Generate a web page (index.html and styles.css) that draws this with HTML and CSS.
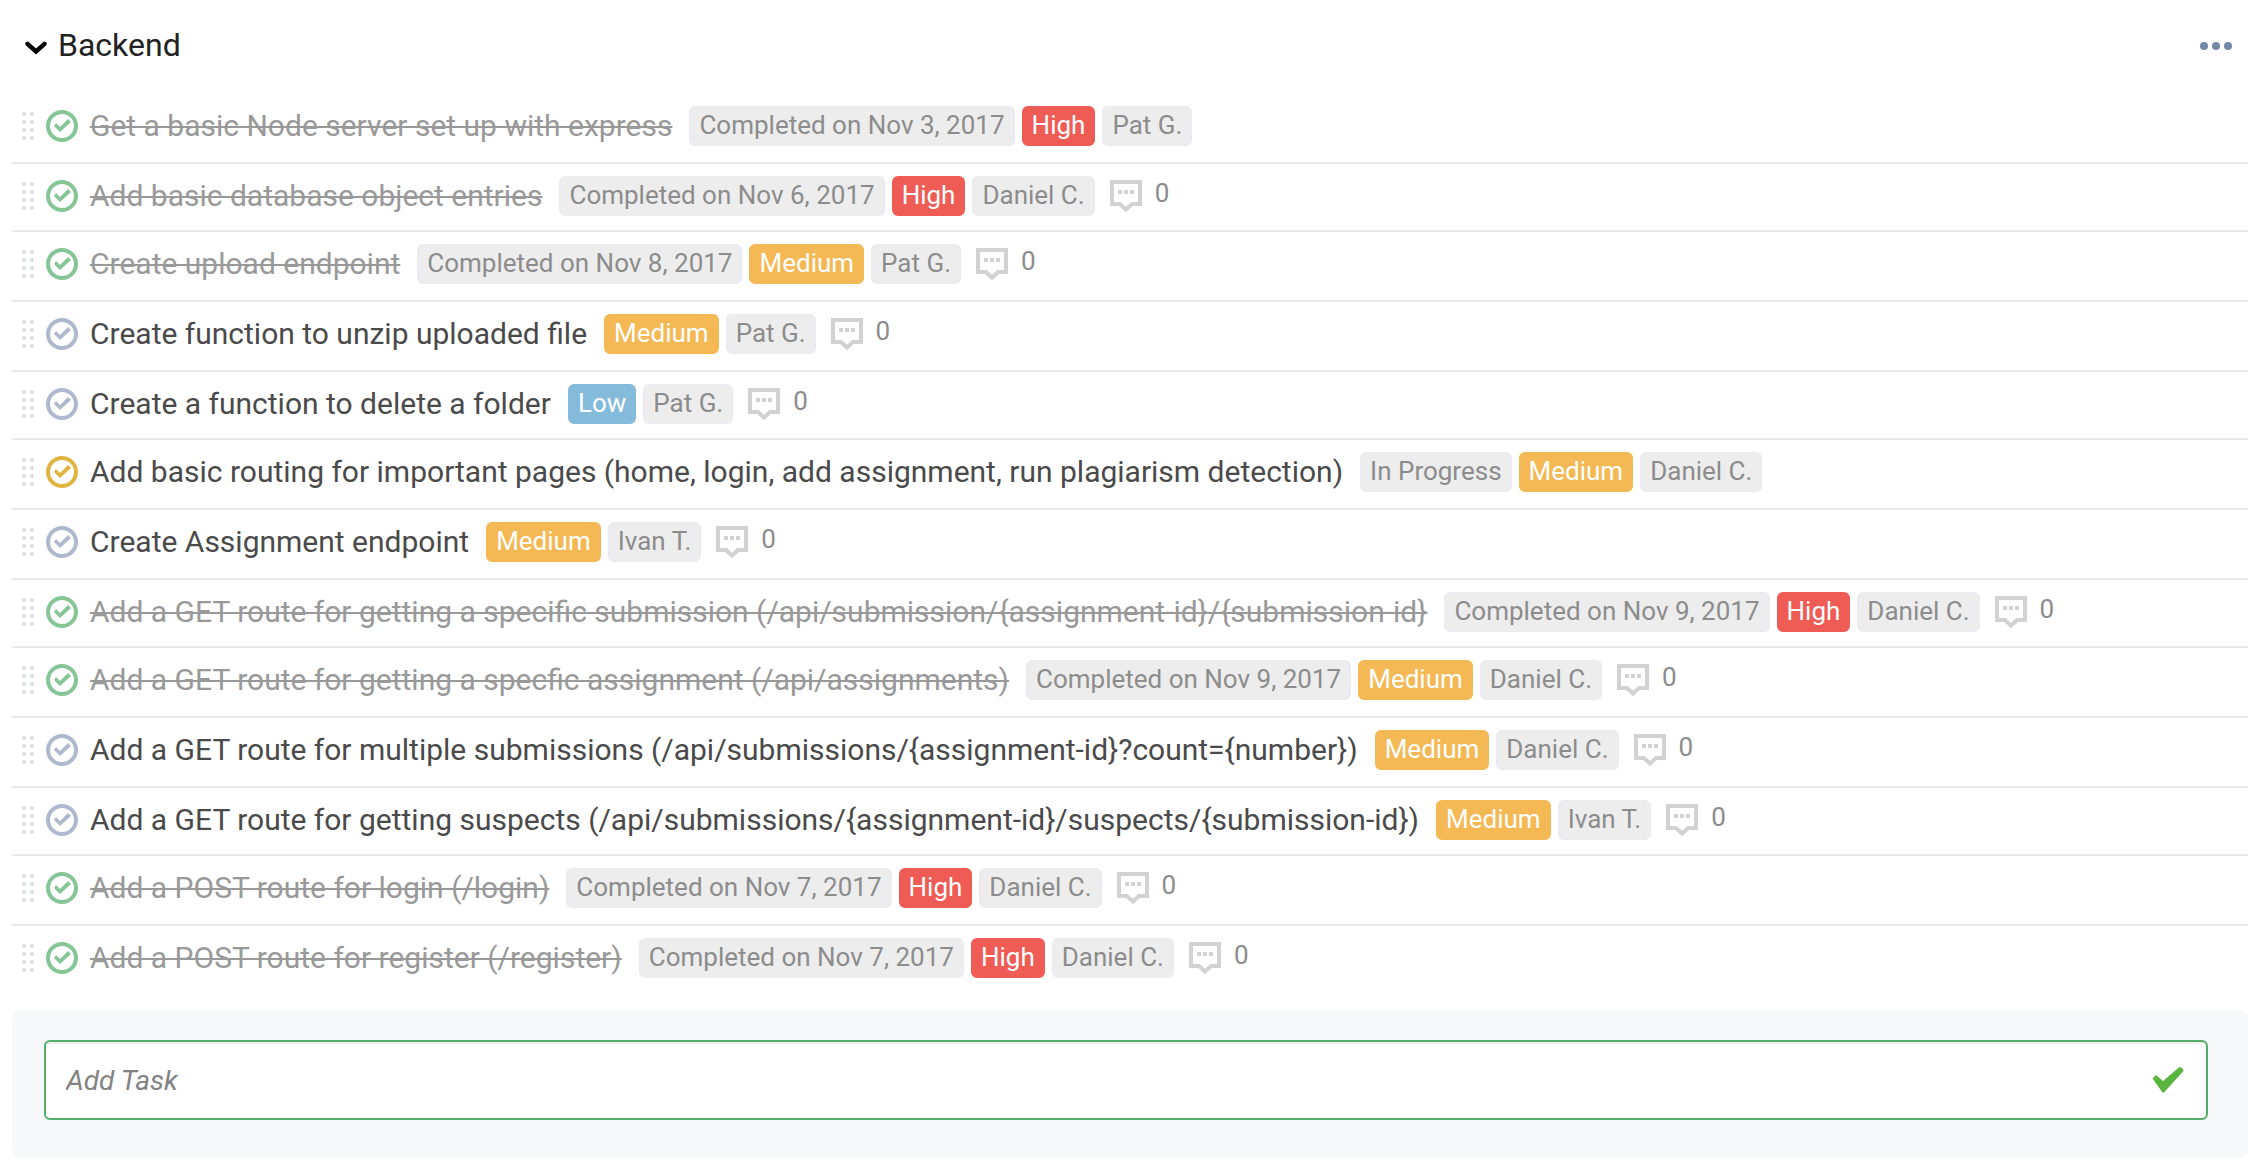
FILE: index.html
```html
<!DOCTYPE html>
<html lang="en">
<head>
<meta charset="utf-8">
<meta name="viewport" content="width=device-width, initial-scale=1">
<title>Backend</title>
<link rel="stylesheet" href="styles.css">
</head>
<body>
<svg class="sprite" aria-hidden="true">
  <symbol id="grip" viewBox="0 0 12 28">
    <circle cx="2" cy="2" r="2"/><circle cx="10" cy="2" r="2"/>
    <circle cx="2" cy="10" r="2"/><circle cx="10" cy="10" r="2"/>
    <circle cx="2" cy="18" r="2"/><circle cx="10" cy="18" r="2"/>
    <circle cx="2" cy="26" r="2"/><circle cx="10" cy="26" r="2"/>
  </symbol>
  <symbol id="comment" viewBox="0 0 32 32">
    <path d="M2 2H30V24H22L16 29.500L10 24H2Z" fill="none" stroke="currentColor" stroke-width="4"/>
    <path d="M8 10H12V14H8ZM14 10H18V14H14ZM20 10H24V14H20Z" fill="currentColor"/>
  </symbol>
</svg>
<main class="section">
  <header class="section-head">
    <button class="collapse" type="button" aria-label="Collapse section" aria-expanded="true">
      <svg width="22" height="14" viewBox="0 0 22 14" aria-hidden="true"><path d="M2.500 2.800L11 10.500L19.500 2.800" fill="none" stroke="currentColor" stroke-width="4.400" stroke-linecap="round"/></svg>
    </button>
    <h1 class="section-title">Backend</h1>
    <button class="more" type="button" aria-label="More options">
      <svg width="32" height="8" viewBox="0 0 32 8" aria-hidden="true"><circle cx="4" cy="4" r="4"/><circle cx="16" cy="4" r="4"/><circle cx="28" cy="4" r="4"/></svg>
    </button>
  </header>
  <ul class="tasks">
    <li class="task done"><svg class="grip"><use href="#grip"/></svg><input class="tick" type="checkbox" id="t1" checked><label class="name" for="t1">Get a basic Node server set up with express</label><div class="chips"><span class="chip">Completed on Nov 3, 2017</span><span class="chip high">High</span><span class="chip">Pat G.</span></div></li>
    <li class="task done"><svg class="grip"><use href="#grip"/></svg><input class="tick" type="checkbox" id="t2" checked><label class="name" for="t2">Add basic database object entries</label><div class="chips"><span class="chip">Completed on Nov 6, 2017</span><span class="chip high">High</span><span class="chip">Daniel C.</span></div><button class="comments" type="button" aria-label="Comments: 0"><svg><use href="#comment"/></svg><span>0</span></button></li>
    <li class="task done"><svg class="grip"><use href="#grip"/></svg><input class="tick" type="checkbox" id="t3" checked><label class="name" for="t3">Create upload endpoint</label><div class="chips"><span class="chip">Completed on Nov 8, 2017</span><span class="chip medium">Medium</span><span class="chip">Pat G.</span></div><button class="comments" type="button" aria-label="Comments: 0"><svg><use href="#comment"/></svg><span>0</span></button></li>
    <li class="task"><svg class="grip"><use href="#grip"/></svg><input class="tick" type="checkbox" id="t4"><label class="name" for="t4">Create function to unzip uploaded file</label><div class="chips"><span class="chip medium">Medium</span><span class="chip">Pat G.</span></div><button class="comments" type="button" aria-label="Comments: 0"><svg><use href="#comment"/></svg><span>0</span></button></li>
    <li class="task"><svg class="grip"><use href="#grip"/></svg><input class="tick" type="checkbox" id="t5"><label class="name" for="t5">Create a function to delete a folder</label><div class="chips"><span class="chip low">Low</span><span class="chip">Pat G.</span></div><button class="comments" type="button" aria-label="Comments: 0"><svg><use href="#comment"/></svg><span>0</span></button></li>
    <li class="task started"><svg class="grip"><use href="#grip"/></svg><input class="tick" type="checkbox" id="t6"><label class="name" for="t6">Add basic routing for important pages (home, login, add assignment, run plagiarism detection)</label><div class="chips"><span class="chip">In Progress</span><span class="chip medium">Medium</span><span class="chip">Daniel C.</span></div></li>
    <li class="task"><svg class="grip"><use href="#grip"/></svg><input class="tick" type="checkbox" id="t7"><label class="name" for="t7">Create Assignment endpoint</label><div class="chips"><span class="chip medium">Medium</span><span class="chip">Ivan T.</span></div><button class="comments" type="button" aria-label="Comments: 0"><svg><use href="#comment"/></svg><span>0</span></button></li>
    <li class="task done"><svg class="grip"><use href="#grip"/></svg><input class="tick" type="checkbox" id="t8" checked><label class="name" for="t8">Add a GET route for getting a specific submission (/api/submission/{assignment-id}/{submission-id}</label><div class="chips"><span class="chip">Completed on Nov 9, 2017</span><span class="chip high">High</span><span class="chip">Daniel C.</span></div><button class="comments" type="button" aria-label="Comments: 0"><svg><use href="#comment"/></svg><span>0</span></button></li>
    <li class="task done"><svg class="grip"><use href="#grip"/></svg><input class="tick" type="checkbox" id="t9" checked><label class="name" for="t9">Add a GET route for getting a specfic assignment (/api/assignments)</label><div class="chips"><span class="chip">Completed on Nov 9, 2017</span><span class="chip medium">Medium</span><span class="chip">Daniel C.</span></div><button class="comments" type="button" aria-label="Comments: 0"><svg><use href="#comment"/></svg><span>0</span></button></li>
    <li class="task"><svg class="grip"><use href="#grip"/></svg><input class="tick" type="checkbox" id="t10"><label class="name" for="t10">Add a GET route for multiple submissions (/api/submissions/{assignment-id}?count={number})</label><div class="chips"><span class="chip medium">Medium</span><span class="chip">Daniel C.</span></div><button class="comments" type="button" aria-label="Comments: 0"><svg><use href="#comment"/></svg><span>0</span></button></li>
    <li class="task"><svg class="grip"><use href="#grip"/></svg><input class="tick" type="checkbox" id="t11"><label class="name" for="t11">Add a GET route for getting suspects (/api/submissions/{assignment-id}/suspects/{submission-id})</label><div class="chips"><span class="chip medium">Medium</span><span class="chip">Ivan T.</span></div><button class="comments" type="button" aria-label="Comments: 0"><svg><use href="#comment"/></svg><span>0</span></button></li>
    <li class="task done"><svg class="grip"><use href="#grip"/></svg><input class="tick" type="checkbox" id="t12" checked><label class="name" for="t12">Add a POST route for login (/login)</label><div class="chips"><span class="chip">Completed on Nov 7, 2017</span><span class="chip high">High</span><span class="chip">Daniel C.</span></div><button class="comments" type="button" aria-label="Comments: 0"><svg><use href="#comment"/></svg><span>0</span></button></li>
    <li class="task done"><svg class="grip"><use href="#grip"/></svg><input class="tick" type="checkbox" id="t13" checked><label class="name" for="t13">Add a POST route for register (/register)</label><div class="chips"><span class="chip">Completed on Nov 7, 2017</span><span class="chip high">High</span><span class="chip">Daniel C.</span></div><button class="comments" type="button" aria-label="Comments: 0"><svg><use href="#comment"/></svg><span>0</span></button></li>
  </ul>
  <form class="add">
    <div class="add-box">
      <input class="add-input" type="text" placeholder="Add Task" aria-label="Add Task">
      <button class="add-save" type="button" aria-label="Save task">
        <svg width="34" height="28" viewBox="0 0 34 28" aria-hidden="true"><path d="M1.500 12.500L5 9L12 15L28.500 1Q32 1.500 32.500 5L13 26.500H11.500Z"/></svg>
      </button>
    </div>
  </form>
</main>
</body>
</html>
```

FILE: styles.css
```css
* { box-sizing: border-box; }

body {
  margin: 0;
  background: #fff;
  color: #4a4a4a;
  font-family: Roboto, "Liberation Sans", sans-serif;
}

button {
  margin: 0;
  padding: 0;
  border: 0;
  background: none;
  color: inherit;
  font: inherit;
  cursor: pointer;
}

svg { display: block; }

.sprite { display: none; }

.section { padding: 0 12px 10px; }

.section-head {
  display: flex;
  align-items: center;
  gap: 11px;
  height: 94px;
  padding: 0 16px 4px 13px;
}

.collapse { color: #000; padding-top: 6px; }

.section-title {
  flex: 1;
  margin: 0;
  color: #222;
  font-size: 32px;
  font-weight: 400;
  line-height: 40px;
}

.more { fill: #7488a8; padding-top: 2px; }

.tasks {
  margin: 0;
  padding: 0;
  list-style: none;
}

.task {
  display: flex;
  align-items: center;
  min-height: 70px;
  padding: 12px 10px 16px;
  border-bottom: 2px solid #e8e8ee;
  --ring: #afb9cd;
}

.task:nth-child(3n + 2) { min-height: 68px; padding-bottom: 14px; }

.task:last-child { border-bottom-color: transparent; }

.task.done { --ring: #86c595; }

.task.started { --ring: #e0b53f; }

.grip {
  flex: none;
  width: 12px;
  height: 28px;
  margin-right: 12px;
  fill: #d9dde8;
}

.tick {
  appearance: none;
  flex: none;
  width: 32px;
  height: 32px;
  margin: 0 12px 0 0;
  border: 4px solid var(--ring);
  border-radius: 50%;
}

.tick::before {
  content: "";
  display: block;
  width: 24px;
  height: 24px;
  background: var(--ring);
  clip-path: polygon(4px 12px, 6px 9px, 10px 13px, 18px 5px, 21px 8px, 10px 18px);
}

.name {
  margin-right: 17px;
  font-size: 30px;
  line-height: 40px;
}

.done .name {
  color: #999;
  text-decoration: line-through;
  text-decoration-thickness: 2px;
}

.chips {
  display: flex;
  flex: none;
  gap: 7px;
}

.chip {
  height: 40px;
  padding: 0 8px;
  border: 2px solid #ebebf1;
  border-radius: 6px;
  background: #ededed;
  color: #8c8c8c;
  font-size: 26px;
  line-height: 35px;
}

.chip.high { border-color: #ef5b55; background: #ef5b55; color: #fff; }

.chip.medium { border-color: #f4b855; background: #f4b855; color: #fff; }

.chip.low { border-color: #84bbdb; background: #84bbdb; color: #fff; }

.comments {
  display: flex;
  flex: none;
  gap: 13px;
  margin-left: 15px;
  color: #8c8c8c;
  font-size: 26px;
  line-height: 26px;
}

.comments svg {
  width: 32px;
  height: 32px;
  color: #d2d2d2;
}

.add {
  margin-top: 14px;
  padding: 30px 40px 38px 32px;
  border-radius: 8px;
  background: #f6f8fa;
}

.add-box {
  display: flex;
  align-items: center;
  height: 80px;
  padding: 0 21px 0 20px;
  border: 2px solid #57ad6a;
  border-radius: 6px;
  background: #fff;
  box-shadow: inset 0 2px 2px rgba(0, 0, 0, 0.07);
}

.add-input {
  flex: 1;
  min-width: 0;
  padding: 2px 0 0;
  border: 0;
  outline: 0;
  background: none;
  color: #4a4a4a;
  font: 28px/40px Roboto, "Liberation Sans", sans-serif;
}

.add-input::placeholder {
  color: #828282;
  font-style: italic;
  opacity: 1;
}

.add-save { fill: #5ab53f; }
```
